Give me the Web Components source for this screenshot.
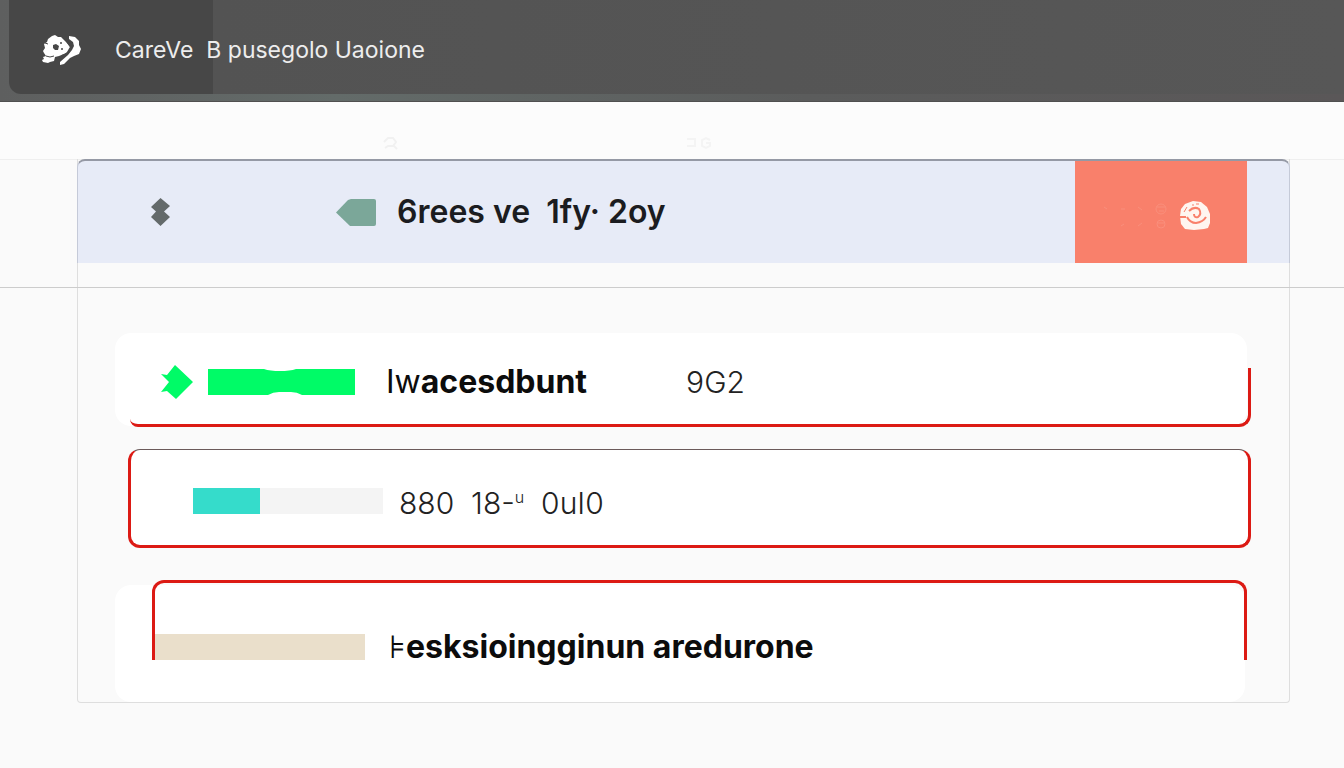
<!DOCTYPE html>
<html lang="en">
<head>
<meta charset="utf-8">
<meta name="viewport" content="width=device-width, initial-scale=1">
<title>CareVe B pusegolo Uaoione</title>
<style>
    body {
        margin: 0;
        min-height: 100vh;
        background: #fafafa;
        color: #0c0c0c;
        font-family: Inter, "Liberation Sans", sans-serif;
    }
    .thin { font-weight: 400; }
    .label { white-space: pre; }
    sup { font-size: 16px; line-height: 16px; }
</style>
</head>
<body>
<app-bar>CareVe  B pusegolo Uaoione</app-bar>
<tool-strip></tool-strip>
<main>
    <panel-banner>6rees ve  1fy· 2oy</panel-banner>
    <card-panel>
        <status-card kind="open">
            <level-bar slot="bar" kind="notched"></level-bar>
            <span class="label"><span class="thin">Iw</span>acesdbunt</span>
            <span slot="value">9G2</span>
        </status-card>
        <status-card kind="framed">
            <level-bar slot="bar" kind="partial"></level-bar>
            <span class="label">880  18-<sup>u</sup>  0uI0</span>
        </status-card>
        <status-card kind="tabbed">
            <level-bar slot="bar" kind="plain"></level-bar>
            <span class="label"><span class="thin">⊧</span>esksioingginun aredurone</span>
        </status-card>
    </card-panel>
</main>

<script>
// Attach an open shadow root and fill it with the given markup
function attach(el, html) {
    el.attachShadow({ mode: 'open' }).innerHTML = html;
}

/** Dark bar at the top of the page */
class AppBar extends HTMLElement {
    constructor() {
        super();
        attach(this, `
            <style>
                :host {
                    display: block;
                    box-sizing: border-box;
                    padding: 0 0 7px 9px;
                    background: linear-gradient(90deg, #5e5f5f, #636b69 25%, #5b5c5c 60%, #5a5758);
                    border-bottom: 1px solid #505050;
                }
                header {
                    display: flex;
                    align-items: center;
                    gap: 33px;
                    height: 94px;
                    box-sizing: border-box;
                    padding: 6px 33px 0;
                    border-radius: 0 0 0 12px;
                    background: linear-gradient(90deg, #474747 204px, #535353 204px, #575757);
                }
                h1 {
                    margin: 0;
                    color: #ededed;
                    font-size: 23px;
                    line-height: 28px;
                    font-weight: 400;
                    white-space: pre;
                }
                svg { display: block; flex: none; }
            </style>
            <header>
                <svg width="40" height="32" viewBox="0 0 40 32" aria-hidden="true">
                    <path fill="#fff" d="M10 2l3-1 3 2 3 0 5 5 5 6-2 3-5 3-5 2-4 1-1 4-4 1-2 1-5-1-1-2 2-1-1-2 3-1-2-3-1-2 2-3-1-4 3-2 1-3z"/>
                    <path fill="#fff" d="M27 2l6 1 4 4 0 4 2 4-2 5-5 2-4 2-6 6-4 1 0-3 8-7 4-5 2-4-1-4-4-3z"/>
                    <path stroke="#474747" stroke-width="2" fill="none" d="M25 7l4 6-4 7-5 2"/>
                    <path fill="#474747" d="M11 11l3-1 3 2-1 4-3 0-2-2z"/>
                    <circle cx="20" cy="15" r="1" fill="#474747"/>
                    <circle cx="19" cy="9" r="1" fill="#474747"/>
                    <path stroke="#474747" fill="none" d="M4 22l4 1 4-1M3 9l3 1"/>
                </svg>
                <h1><slot></slot></h1>
            </header>
        `);
    }
}

/** Pale strip between the bar and the panel */
class ToolStrip extends HTMLElement {
    constructor() {
        super();
        attach(this, `
            <style>
                :host {
                    display: flex;
                    align-items: center;
                    gap: 288px;
                    height: 58px;
                    padding: 24px 382px 0;
                    box-sizing: border-box;
                    background: #fcfcfc;
                }
                svg { display: block; flex: none; }
            </style>
            <svg width="16" height="14" fill="none" stroke="#f1f1f1" stroke-width="2" aria-hidden="true"><path d="M2 6l4-4h5l3 4-3 4H6l-3 2M12 10l3 3"/></svg>
            <svg width="26" height="14" fill="none" stroke="#f4f4f4" stroke-width="2" aria-hidden="true"><path d="M1 3h8v7H1M24 4l-4-2-4 2v6l4 2 4-2V7h-4"/></svg>
        `);
    }
}

/** Blue title row with its action button */
class PanelBanner extends HTMLElement {
    constructor() {
        super();
        attach(this, `
            <style>
                :host {
                    display: block;
                    padding: 0 54px 0 77px;
                    border-top: 1px solid #efefef;
                    border-bottom: 1px solid #cccccc;
                    margin-top: -1px;
                }
                .frame {
                    border: solid #dedede;
                    border-width: 0 1px;
                    padding-bottom: 24px;
                }
                .banner {
                    display: flex;
                    align-items: stretch;
                    height: 104px;
                    margin: -1px -1px 0;
                    box-sizing: border-box;
                    border: solid #c5cad8;
                    border-width: 2px 1px 0;
                    border-top-color: #9599a5;
                    border-radius: 8px 8px 0 0;
                    background: #e7ebf7;
                }
                .lead {
                    flex: 1;
                    display: flex;
                    align-items: center;
                    padding-left: 72px;
                }
                .tag { margin: 0 21px 0 165px; }
                h2 {
                    margin: 0;
                    font-size: 32px;
                    line-height: 40px;
                    font-weight: 600;
                    color: #1b1c20;
                    white-space: pre;
                }
                button {
                    display: flex;
                    align-items: center;
                    justify-content: flex-end;
                    width: 172px;
                    margin: 0 42px 0 0;
                    padding: 6px 36px 0;
                    box-sizing: border-box;
                    border: 0;
                    background: #f9806b;
                }
                svg { display: block; flex: none; }
            </style>
            <div class="frame">
                <div class="banner">
                    <div class="lead">
                        <svg width="21" height="28" viewBox="0 0 21 28" fill="#646a6b" aria-hidden="true">
                            <path d="M10.500 0L20 8l-6 5.500L20 19l-9.500 9L1 19l5-5.500L1 9z"/>
                        </svg>
                        <svg class="tag" width="40" height="27" viewBox="0 0 40 27" fill="#7ba799" aria-hidden="true">
                            <path d="M0 13.500L12 1l3-1h23q2 0 2 2v23q0 2-2 2H14z"/>
                        </svg>
                        <h2><slot></slot></h2>
                    </div>
                    <button type="button" aria-label="Open">
                        <svg width="110" height="30" viewBox="0 0 110 30" aria-hidden="true">
                            <g fill="none" stroke="#fb9684" opacity=".7">
                                <path d="M3 7l3 2M20 9h4M37 7l4 3M20 26l3-2M37 26l4-3"/>
                                <circle cx="60" cy="9" r="5"/><circle cx="60" cy="24" r="4"/>
                                <path d="M56 7h8M58 11h5M57 23h6"/>
                            </g>
                            <path fill="#fff5f0" d="M79 16l1-7 4-5 8-3 8 1 6 5 3 7 0 9-2 5-4 1-10 1-9-1-4-5z"/>
                            <g fill="none" stroke="#f9806b" stroke-width="2">
                                <path d="M88 11q5-5 10-2 3 5-1 8-4 1-4-3"/>
                                <path d="M86 17q3 6 9 6 7-1 10-6M79 17h6"/>
                            </g>
                            <path fill="none" stroke="#f9806b" d="M83 12l3-5M91 5h2M95 4h3"/>
                        </svg>
                    </button>
                </div>
            </div>
        `);
    }
}

/** Bordered body that stacks the cards */
class CardPanel extends HTMLElement {
    constructor() {
        super();
        attach(this, `
            <style>
                :host {
                    display: block;
                    padding: 0 54px 0 77px;
                }
                section {
                    display: flex;
                    flex-direction: column;
                    padding: 45px 42px 0 37px;
                    border: solid #dedede;
                    border-width: 0 1px 1px;
                    border-radius: 0 0 4px 4px;
                }
            </style>
            <section><slot></slot></section>
        `);
    }
}

/** White card: bar, label and an optional value, partly outlined in red */
class StatusCard extends HTMLElement {
    constructor() {
        super();
        attach(this, `
            <style>
                :host {
                    --red: #dc1a14;
                    display: flex;
                    align-items: center;
                    position: relative;
                    box-sizing: border-box;
                    background: #fff;
                    border-radius: 16px;
                    font-size: 32px;
                    line-height: 40px;
                    font-weight: 700;
                    white-space: nowrap;
                }
                :host::after {
                    content: "";
                    position: absolute;
                    pointer-events: none;
                    border: 0 solid var(--red);
                }
                :host([kind="open"]) {
                    height: 93px;
                    padding: 4px 0 0 45px;
                }
                :host([kind="open"])::after {
                    inset: 35px -4px -1px 15px;
                    border-width: 0 3px 3px 0;
                    border-radius: 0 0 12px 8px;
                }
                :host([kind="framed"]) {
                    height: 99px;
                    margin: 23px -4px 0 13px;
                    padding: 6px 0 0 62px;
                    border: 3px solid var(--red);
                    border-top: 1px solid #6b5a5a;
                    border-radius: 12px;
                    font-size: 30px;
                    font-weight: 300;
                    color: #222;
                }
                :host([kind="framed"])::after { content: none; }
                :host([kind="tabbed"]) {
                    height: 117px;
                    margin: 37px 2px 0 0;
                    padding: 6px 0 0 40px;
                }
                :host([kind="tabbed"])::after {
                    inset: -5px -2px 42px 37px;
                    border-width: 3px 3px 0;
                    border-radius: 12px 12px 0 0;
                }
                .bar { margin-right: 31px; }
                :host([kind="framed"]) .bar { margin-right: 16px; }
                :host([kind="tabbed"]) .bar { margin-right: 24px; }
                :host([kind="framed"]) .text { padding-top: 4px; }
                .value {
                    margin-left: 99px;
                    font-size: 30px;
                    font-weight: 300;
                    color: #222;
                }
            </style>
            <div class="bar"><slot name="bar"></slot></div>
            <div class="text"><slot></slot></div>
            <div class="value"><slot name="value"></slot></div>
        `);
    }
}

/** Coloured level shown at the start of a card */
class LevelBar extends HTMLElement {
    constructor() {
        super();
        const shapes = {
            notched: `
                <svg width="195" height="36" viewBox="0 0 195 36" fill="#00fb67" aria-hidden="true">
                    <path d="M15 1l18 17-17 17-9-8-6 1 8-10-8-8 6 1z"/>
                    <path d="M48 5h56q6 2 16 2t16-2h59v26h-53q-5-3-11-3h-12q-6 0-11 3H48z"/>
                </svg>`,
            partial: '<div class="track"><div class="fill"></div></div>',
            plain: '<div class="block"></div>'
        };
        attach(this, `
            <style>
                :host { display: block; }
                svg { display: block; }
                .track { width: 190px; height: 26px; background: #f4f4f4; }
                .fill { width: 35%; height: 100%; background: #35dccb; }
                .block { width: 210px; height: 26px; background: #eadfcb; }
            </style>
            ${shapes[this.getAttribute('kind')]}
        `);
    }
}

customElements.define('app-bar', AppBar);
customElements.define('tool-strip', ToolStrip);
customElements.define('panel-banner', PanelBanner);
customElements.define('card-panel', CardPanel);
customElements.define('status-card', StatusCard);
customElements.define('level-bar', LevelBar);
</script>
</body>
</html>
